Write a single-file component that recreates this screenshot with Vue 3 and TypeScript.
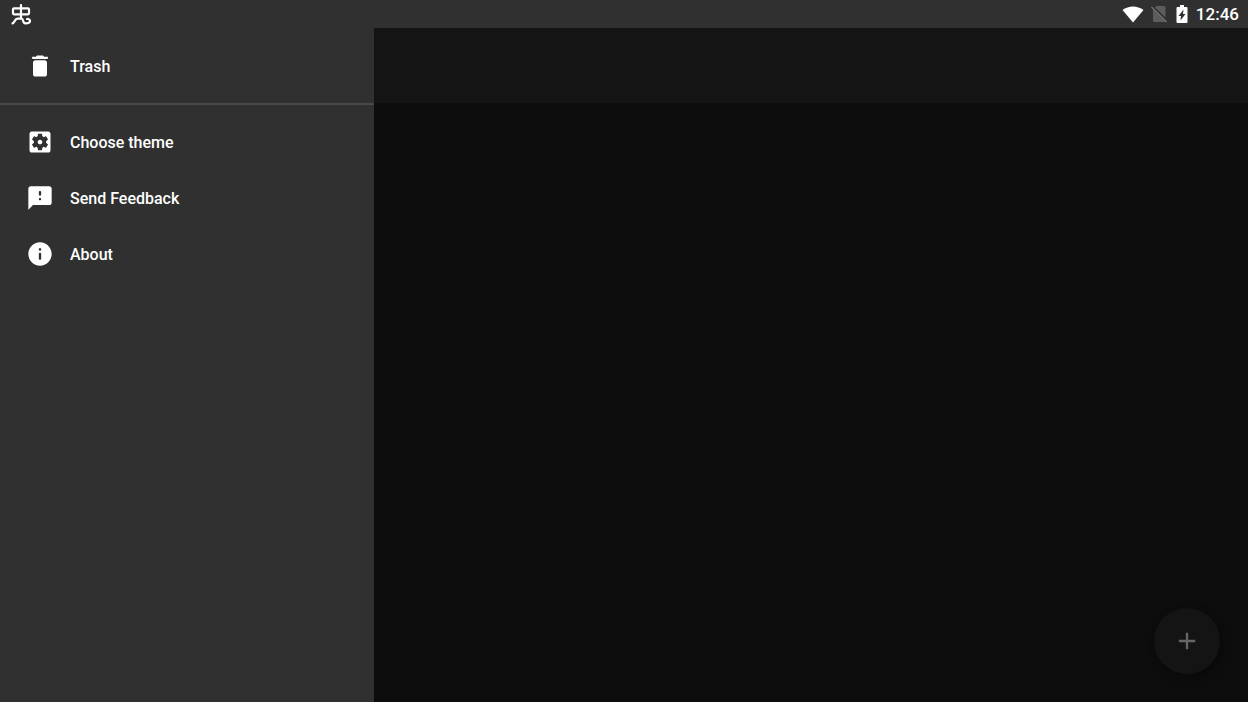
<script setup lang="ts">
interface MenuItem {
  label: string
  path: string
}

const primaryItems: MenuItem[] = [
  {
    label: 'Trash',
    path: 'M6 19c0 1.1.9 2 2 2h8c1.1 0 2-.9 2-2V9c0-1.1-.9-2-2-2H8c-1.1 0-2 .9-2 2v10zM18 4h-2.500l-.71-.71c-.18-.18-.44-.29-.7-.29H9.910c-.26 0-.52.11-.7.29L8.500 4H6c-.55 0-1 .45-1 1s.45 1 1 1h12c.55 0 1-.45 1-1s-.45-1-1-1z',
  },
]

const secondaryItems: MenuItem[] = [
  {
    label: 'Choose theme',
    path: 'M12 10c-1.100 0-2 .9-2 2s.9 2 2 2 2-.9 2-2-.9-2-2-2zm7-7H5c-1.110 0-2 .9-2 2v14c0 1.100.890 2 2 2h14c1.110 0 2-.9 2-2V5c0-1.100-.890-2-2-2zm-1.750 9c0 .230-.020.460-.050.680l1.480 1.160c.130.110.170.300.080.450l-1.400 2.420c-.090.150-.270.210-.430.150l-1.740-.7c-.360.280-.760.510-1.180.690l-.260 1.850c-.030.170-.180.300-.350.300h-2.800c-.170 0-.320-.130-.350-.290l-.260-1.850c-.430-.180-.820-.410-1.180-.690l-1.740.7c-.160.060-.340 0-.430-.150l-1.400-2.420c-.090-.150-.050-.340.080-.450l1.480-1.160c-.030-.230-.050-.460-.050-.690s.020-.460.050-.680l-1.480-1.160c-.130-.110-.170-.300-.080-.450l1.400-2.420c.090-.150.270-.210.430-.150l1.740.7c.360-.280.760-.510 1.180-.690l.260-1.850c.030-.170.180-.300.350-.300h2.800c.170 0 .320.130.350.290l.260 1.850c.430.180.820.410 1.180.690l1.740-.7c.160-.060.340 0 .430.150l1.400 2.420c.090.150.050.340-.080.450l-1.480 1.160c.030.230.050.460.050.690z',
  },
  {
    label: 'Send Feedback',
    path: 'M20 2H4c-1.100 0-1.990.9-1.990 2L2 22l4-4h14c1.100 0 2-.9 2-2V4c0-1.100-.9-2-2-2zm-8 12c-.55 0-1-.45-1-1s.45-1 1-1 1 .45 1 1-.45 1-1 1zm1-5c0 .55-.45 1-1 1s-1-.45-1-1V7c0-.55.45-1 1-1s1 .45 1 1v2z',
  },
  {
    label: 'About',
    path: 'M12 2C6.480 2 2 6.480 2 12s4.480 10 10 10 10-4.480 10-10S17.520 2 12 2zm0 15c-.55 0-1-.45-1-1v-4c0-.55.45-1 1-1s1 .45 1 1v4c0 .55-.45 1-1 1zm1-8h-2V7h2v2z',
  },
]
</script>

<template>
  <div class="screen">
    <header class="status">
      <svg class="debug" viewBox="0 0 22 22" aria-hidden="true">
        <path d="M11 2V15.500M4 5.300H18Q19 5.300 19 6.300V10.300Q19 11.300 18 11.300H4Q3 11.300 3 10.300V6.300Q3 5.300 4 5.300ZM2.500 20.300C5 20 4.500 15.700 7.500 15.700H11.500C14 15.700 12 20.300 15.500 20.300C18.500 20.300 20 19.500 20 18C20 16.500 18.500 15.800 17 16" />
      </svg>
      <div class="indicators">
        <svg class="wifi" viewBox="0 0 22 18" aria-hidden="true">
          <path d="M11 17.500 .5 5C6.500.3 15.500.3 21.500 5Z" />
        </svg>
        <svg class="sim" viewBox="0 0 18 18" aria-hidden="true">
          <path d="M6.500 1H14Q15.500 1 15.500 2.500V12.500L5 2.500ZM3 4.500 15.500 17H4.500Q3 17 3 15.500Z" />
          <path class="slash" d="M1.500 2 16.500 17" />
        </svg>
        <svg class="battery" viewBox="0 0 12 18" aria-hidden="true">
          <path fill-rule="evenodd" d="M4 0H8V2H10.500Q11.500 2 11.500 3V17Q11.500 18 10.500 18H1.500Q.5 18 .5 17V3Q.5 2 1.500 2H4ZM7.500 4.500 2.500 11H5L4.500 15.500 9.500 9H7Z" />
        </svg>
        <time>12:46</time>
      </div>
    </header>
    <div class="body">
      <nav class="drawer">
        <ul class="group">
          <li v-for="item in primaryItems" :key="item.label">
            <button type="button" class="item">
              <svg viewBox="0 0 24 24" aria-hidden="true"><path :d="item.path" /></svg>
              <span>{{ item.label }}</span>
            </button>
          </li>
        </ul>
        <ul class="group second">
          <li v-for="item in secondaryItems" :key="item.label">
            <button type="button" class="item">
              <svg viewBox="0 0 24 24" aria-hidden="true"><path :d="item.path" /></svg>
              <span>{{ item.label }}</span>
            </button>
          </li>
        </ul>
      </nav>
      <main class="content">
        <div class="toolbar"></div>
        <button type="button" class="fab" aria-label="Add">
          <svg viewBox="0 0 24 24" aria-hidden="true"><path d="M12 5V19M5 12H19" /></svg>
        </button>
      </main>
    </div>
  </div>
</template>

<style>
body {
  margin: 0;
  background: #0d0d0d;
}
</style>

<style scoped>
.screen {
  min-height: 100vh;
  display: flex;
  flex-direction: column;
  font-family: Roboto, sans-serif;
  color: #fff;
}

.status {
  height: 28px;
  box-sizing: border-box;
  padding: 0 9px 0 10px;
  display: flex;
  align-items: center;
  justify-content: space-between;
  background: #303030;
}

.debug {
  width: 22px;
  height: 22px;
  fill: none;
  stroke: #fff;
  stroke-width: 2.2;
  stroke-linecap: round;
  stroke-linejoin: round;
}

.indicators {
  display: flex;
  align-items: center;
  gap: 8px;
  fill: #fff;
}

.wifi {
  width: 22px;
  height: 18px;
  margin-right: -2px;
}

.sim {
  width: 18px;
  height: 18px;
  fill: #5c5c5c;
}

.slash {
  stroke: #707070;
  stroke-width: 1.5;
}

.battery {
  width: 12px;
  height: 18px;
}

time {
  font-size: 17px;
  line-height: 28px;
  font-weight: 500;
}

.body {
  flex: 1;
  display: flex;
}

.drawer {
  width: 30%;
  background: #303030;
}

.group {
  list-style: none;
  margin: 0;
  padding: 10px 0 9px;
}

.second {
  border-top: 2px solid #484848;
  padding-top: 9px;
}

.item {
  width: 100%;
  height: 56px;
  padding: 0 26px;
  border: 0;
  background: none;
  color: #fff;
  display: flex;
  align-items: center;
  gap: 16px;
  font: 500 16px/24px Roboto, sans-serif;
  text-align: left;
}

.item span {
  padding-top: 2px;
}

.item svg {
  width: 28px;
  height: 28px;
  fill: #fff;
}

.content {
  flex: 1;
  display: flex;
  flex-direction: column;
  justify-content: space-between;
  background: #0d0d0d;
}

.toolbar {
  height: 75px;
  background: #141414;
}

.fab {
  align-self: flex-end;
  width: 66px;
  height: 66px;
  margin: 0 28px 28px;
  padding: 0;
  border: 0;
  border-radius: 50%;
  background: #141414;
  display: grid;
  place-items: center;
  box-shadow: 3px 4px 8px #0a0a0a;
}

.fab svg {
  width: 28px;
  height: 28px;
  fill: none;
  stroke: #666;
  stroke-width: 2;
}
</style>
